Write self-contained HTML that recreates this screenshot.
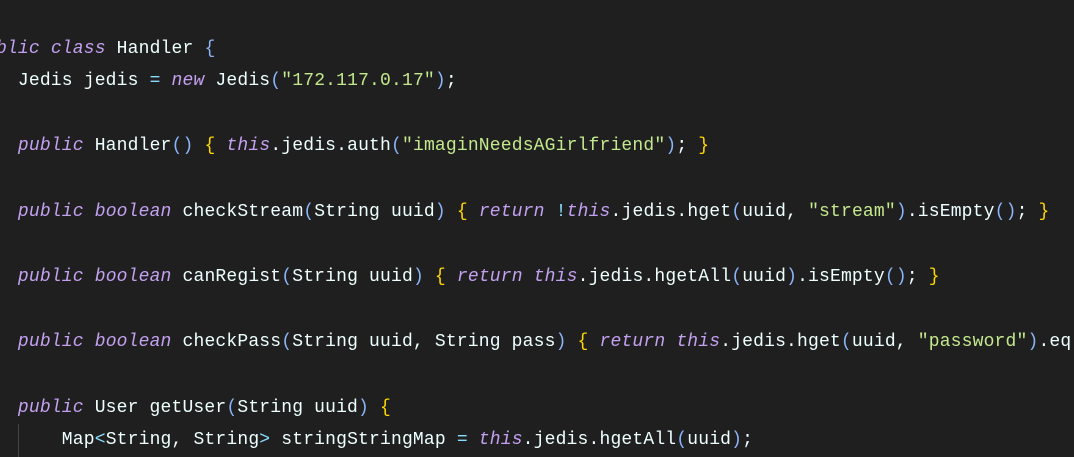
<!DOCTYPE html>
<html><head><meta charset="utf-8"><style>
html,body{margin:0;padding:0;background:#1f1f1f;width:1074px;height:457px;overflow:hidden}
#w{position:absolute;left:0;top:0;width:1074px;height:457px;overflow:hidden}
pre{margin:0;position:absolute;left:-26px;top:32.7px;font-family:"Liberation Mono",monospace;font-size:18px;letter-spacing:0.17px;line-height:32.6px;color:#eeffff;white-space:pre}
.k{color:#c3a0f0;font-style:italic}
.o{color:#89ddff}
.s{color:#c3e88d}
.y{color:#ffd700}
.b{color:#8ab4f8}
.g{position:absolute;left:18px;top:424px;width:1px;height:40px;background:#444}
</style></head><body><div id="w">
<div class="g"></div>
<pre><span class="k">public</span> <span class="k">class</span> Handler <span class="b">{</span>
    Jedis jedis <span class="o">=</span> <span class="k">new</span> Jedis<span class="b">(</span><span class="s">"172.117.0.17"</span><span class="b">)</span>;

    <span class="k">public</span> Handler<span class="b">()</span> <span class="y">{</span> <span class="k">this</span>.jedis.auth<span class="b">(</span><span class="s">"imaginNeedsAGirlfriend"</span><span class="b">)</span>; <span class="y">}</span>

    <span class="k">public</span> <span class="k">boolean</span> checkStream<span class="b">(</span>String uuid<span class="b">)</span> <span class="y">{</span> <span class="k">return</span> <span class="o">!</span><span class="k">this</span>.jedis.hget<span class="b">(</span>uuid, <span class="s">"stream"</span><span class="b">)</span>.isEmpty<span class="b">()</span>; <span class="y">}</span>

    <span class="k">public</span> <span class="k">boolean</span> canRegist<span class="b">(</span>String uuid<span class="b">)</span> <span class="y">{</span> <span class="k">return</span> <span class="k">this</span>.jedis.hgetAll<span class="b">(</span>uuid<span class="b">)</span>.isEmpty<span class="b">()</span>; <span class="y">}</span>

    <span class="k">public</span> <span class="k">boolean</span> checkPass<span class="b">(</span>String uuid, String pass<span class="b">)</span> <span class="y">{</span> <span class="k">return</span> <span class="k">this</span>.jedis.hget<span class="b">(</span>uuid, <span class="s">"password"</span><span class="b">)</span>.eq</pre>
<pre style="top:391.9px"><span class="k">    public</span> User getUser<span class="b">(</span>String uuid<span class="b">)</span> <span class="y">{</span>
        Map<span class="o">&lt;</span>String, String<span class="o">&gt;</span> stringStringMap <span class="o">=</span> <span class="k">this</span>.jedis.hgetAll<span class="b">(</span>uuid<span class="b">)</span>;
</pre>
</div></body></html>
